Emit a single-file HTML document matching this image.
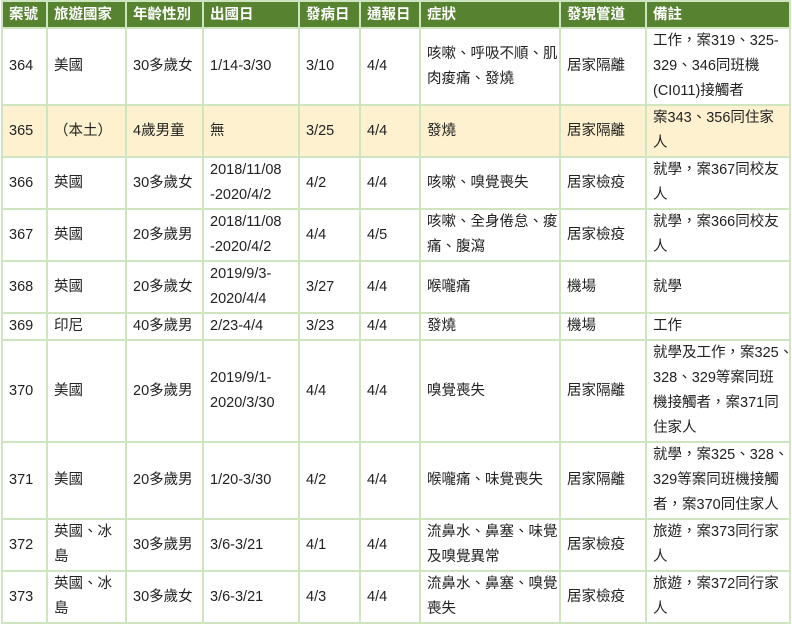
<!DOCTYPE html>
<html><head><meta charset="utf-8"><style>
body{margin:0;background:#fff;}
table{position:absolute;left:1px;top:0px;border-collapse:collapse;table-layout:fixed;width:788px;font-family:"Liberation Sans","Noto Sans CJK TC",sans-serif;font-size:14.5px;color:#222;}
td,th{border:2px solid #cfe5c0;padding:0 5px 0 6px;vertical-align:middle;text-align:left;line-height:25px;white-space:nowrap;overflow:hidden;}
th{background:#578331;color:#fff;font-weight:bold;height:25px;line-height:24px;border-color:#cfe5c0;}
tr.y td{background:#fdf1cf;}
</style></head><body>
<table>
<colgroup><col style="width:45px"><col style="width:79px"><col style="width:77px"><col style="width:96px"><col style="width:61px"><col style="width:60px"><col style="width:140px"><col style="width:86px"><col style="width:144px"></colgroup>
<tr><th>案號</th><th>旅遊國家</th><th>年齡性別</th><th>出國日</th><th>發病日</th><th>通報日</th><th>症狀</th><th>發現管道</th><th>備註</th></tr>
<tr style="height:76px"><td>364</td><td>美國</td><td>30多歲女</td><td>1/14-3/30</td><td>3/10</td><td>4/4</td><td>咳嗽、呼吸不順、肌<br>肉痠痛、發燒</td><td>居家隔離</td><td>工作，案319、325-<br>329、346同班機<br>(CI011)接觸者</td></tr>
<tr class="y" style="height:51px"><td>365</td><td>（本土）</td><td>4歲男童</td><td>無</td><td>3/25</td><td>4/4</td><td>發燒</td><td>居家隔離</td><td>案343、356同住家<br>人</td></tr>
<tr style="height:52px"><td>366</td><td>英國</td><td>30多歲女</td><td>2018/11/08<br>-2020/4/2</td><td>4/2</td><td>4/4</td><td>咳嗽、嗅覺喪失</td><td>居家檢疫</td><td>就學，案367同校友<br>人</td></tr>
<tr style="height:51px"><td>367</td><td>英國</td><td>20多歲男</td><td>2018/11/08<br>-2020/4/2</td><td>4/4</td><td>4/5</td><td>咳嗽、全身倦怠、痠<br>痛、腹瀉</td><td>居家檢疫</td><td>就學，案366同校友<br>人</td></tr>
<tr style="height:51px"><td>368</td><td>英國</td><td>20多歲女</td><td>2019/9/3-<br>2020/4/4</td><td>3/27</td><td>4/4</td><td>喉嚨痛</td><td>機場</td><td>就學</td></tr>
<tr style="height:26px"><td>369</td><td>印尼</td><td>40多歲男</td><td>2/23-4/4</td><td>3/23</td><td>4/4</td><td>發燒</td><td>機場</td><td>工作</td></tr>
<tr style="height:100px"><td>370</td><td>美國</td><td>20多歲男</td><td>2019/9/1-<br>2020/3/30</td><td>4/4</td><td>4/4</td><td>嗅覺喪失</td><td>居家隔離</td><td>就學及工作，案325、<br>328、329等案同班<br>機接觸者，案371同<br>住家人</td></tr>
<tr style="height:75px"><td>371</td><td>美國</td><td>20多歲男</td><td>1/20-3/30</td><td>4/2</td><td>4/4</td><td>喉嚨痛、味覺喪失</td><td>居家隔離</td><td>就學，案325、328、<br>329等案同班機接觸<br>者，案370同住家人</td></tr>
<tr style="height:51px"><td>372</td><td>英國、冰<br>島</td><td>30多歲男</td><td>3/6-3/21</td><td>4/1</td><td>4/4</td><td>流鼻水、鼻塞、味覺<br>及嗅覺異常</td><td>居家檢疫</td><td>旅遊，案373同行家<br>人</td></tr>
<tr style="height:51px"><td>373</td><td>英國、冰<br>島</td><td>30多歲女</td><td>3/6-3/21</td><td>4/3</td><td>4/4</td><td>流鼻水、鼻塞、嗅覺<br>喪失</td><td>居家檢疫</td><td>旅遊，案372同行家<br>人</td></tr>
</table>
</body></html>
